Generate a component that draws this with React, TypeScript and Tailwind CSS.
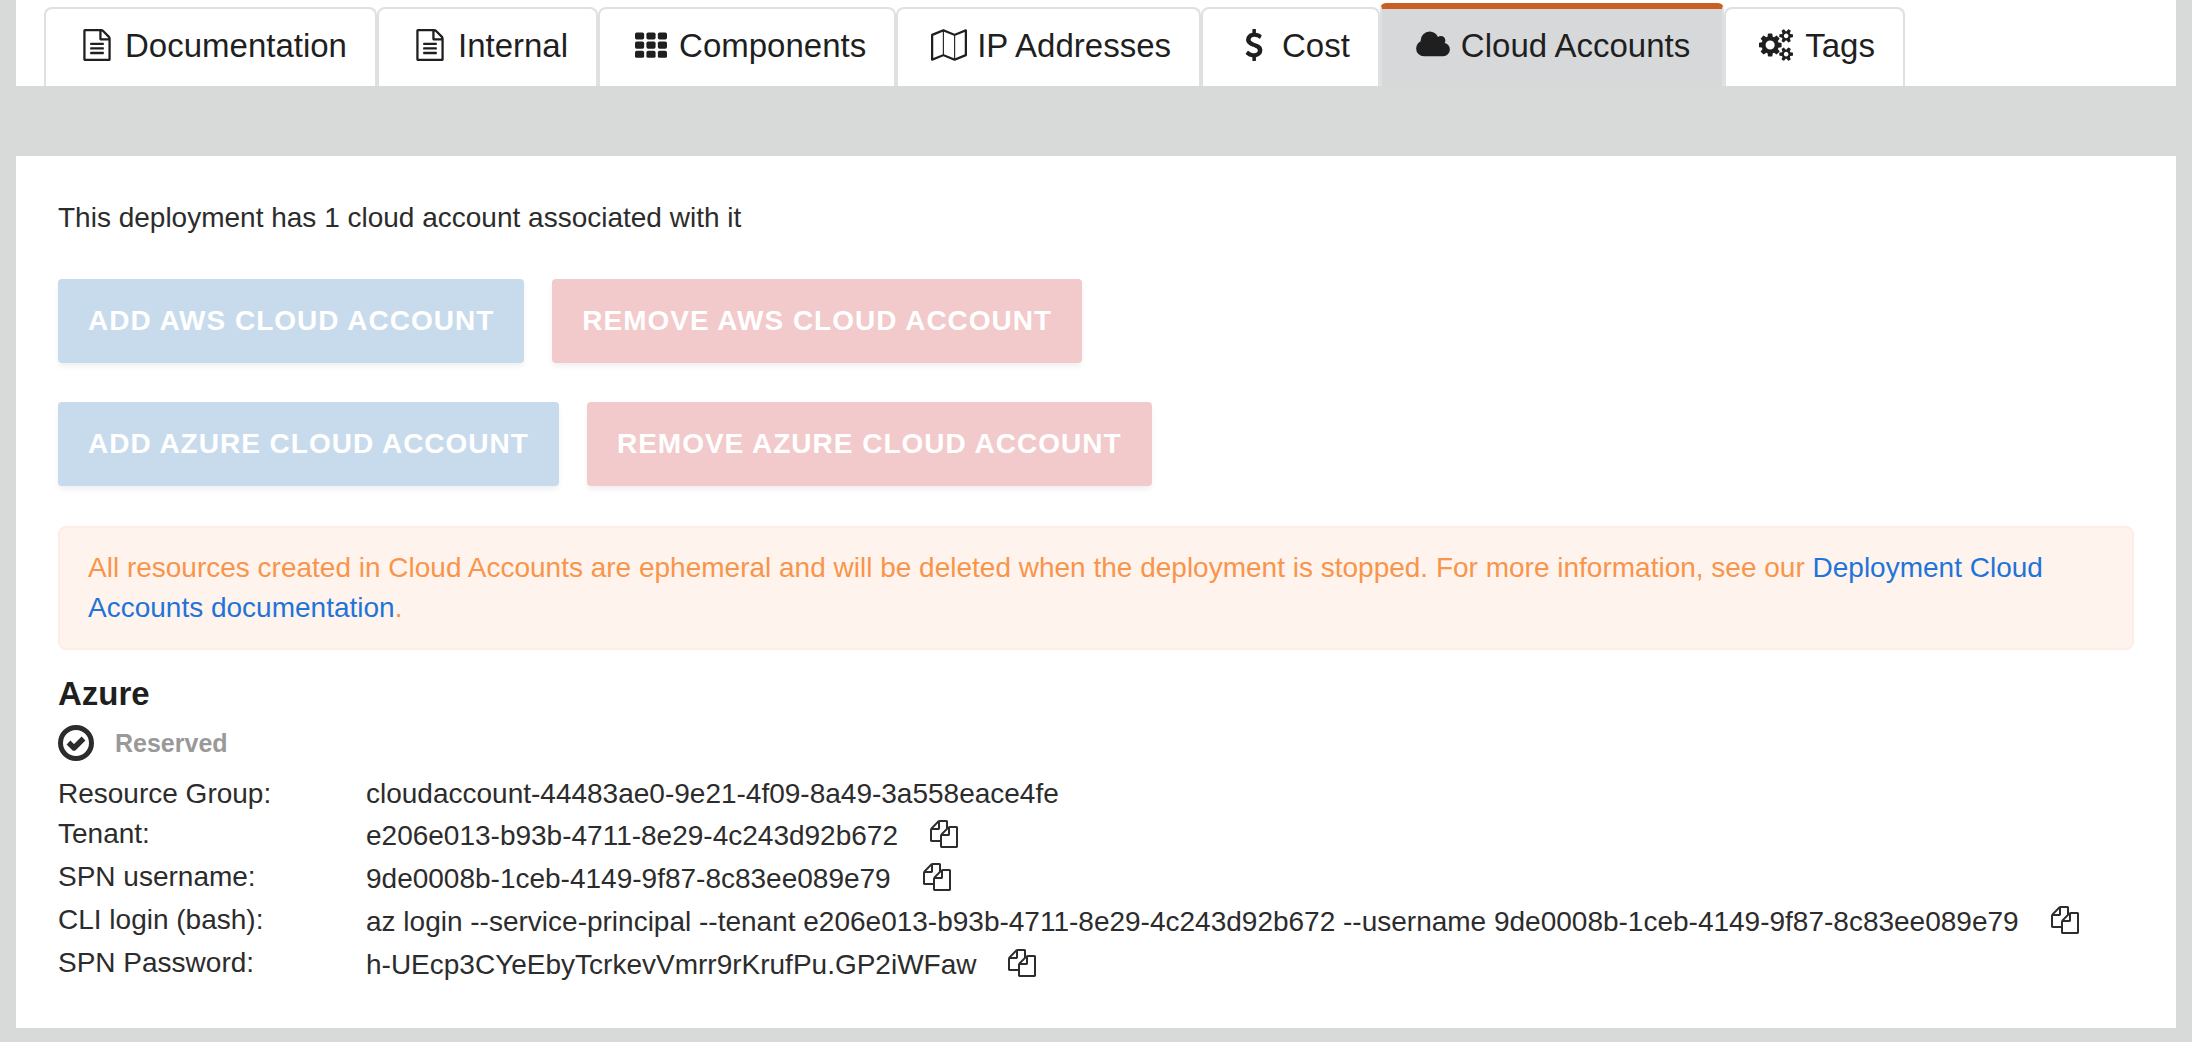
import React from "react";

function Icon({ box, className, children }: { box: string; className: string; children: React.ReactNode }) {
  return (
    <svg viewBox={box} className={className} fill="currentColor" aria-hidden="true">
      {children}
    </svg>
  );
}

const FileIcon = () => (
  <Icon box="0 0 1792 1792" className="size-8">
    <path d="M1596 380q28 28 48 76t20 88v1152q0 40-28 68t-68 28h-1344q-40 0-68-28t-28-68v-1600q0-40 28-68t68-28h896q40 0 88 20t76 48zm-444-244v376h376q-10-29-22-41l-313-313q-12-12-41-22zm384 1528v-1024h-416q-40 0-68-28t-28-68v-416h-768v1536h1280zm-1024-864q0-14 9-23t23-9h704q14 0 23 9t9 23v64q0 14-9 23t-23 9h-704q-14 0-23-9t-9-23v-64zm736 224q14 0 23 9t9 23v64q0 14-9 23t-23 9h-704q-14 0-23-9t-9-23v-64q0-14 9-23t23-9h704zm0 256q14 0 23 9t9 23v64q0 14-9 23t-23 9h-704q-14 0-23-9t-9-23v-64q0-14 9-23t23-9h704z" />
  </Icon>
);

const GridIcon = () => (
  <Icon box="0 0 1792 1792" className="size-8">
    {[192, 704, 1216].map((y) =>
      [0, 640, 1280].map((x) => <rect key={`${x}-${y}`} x={x} y={y} width="512" height="400" rx="96" />)
    )}
  </Icon>
);

const MapIcon = () => (
  <Icon box="0 0 2048 1792" className="h-8 w-9">
    <path
      fillRule="evenodd"
      d="M2020 11q28 20 28 53v1408q0 20-11 36t-29 23l-640 256q-24 11-48 0l-616-246-616 246q-10 5-24 5-19 0-36-11-28-20-28-53v-1408q0-20 11-36t29-23l640-256q24-11 48 0l616 246 616-246q32-13 60 6zM736 146v1270l576 230v-1270zM128 363v1270l544-217v-1270zM1920 1429v-1270l-544 217v1270z"
    />
  </Icon>
);

const DollarIcon = () => (
  <Icon box="0 0 1792 1792" className="size-8">
    <path d="M1362 1185q0 153-99.5 263.5t-258.5 136.5v175q0 14-9 23t-23 9h-135q-13 0-22.5-9.5t-9.5-22.5v-175q-66-9-127.5-31t-101.5-44.5-74-48-46.5-37.5-17.5-18q-17-21-2-41l103-135q7-10 23-12 15-2 24 9l2 2q113 99 243 125 37 8 74 8 81 0 142.5-43t61.5-122q0-28-15-53t-33.5-42-58.5-37.5-66-32-80-32.5q-39-16-61.5-25t-61.5-26.5-62.5-31-56.5-35.5-53.5-42.5-43.5-49-35.5-58-21-66.5-8.5-78q0-138 98-242t255-134v-180q0-13 9.5-22.5t22.5-9.5h135q14 0 23 9t9 23v176q57 6 110.5 23t87 33.5 63.5 37.5 39 29 15 14q17 18 5 38l-81 146q-8 15-23 16-14 3-27-7-3-3-14.5-12t-39-26.5-58.5-32-74.5-26-85.5-11.5q-95 0-155 43t-60 111q0 26 8.5 48t29.5 41.5 39.5 33 56 31 60.5 27 70 27.5q53 20 81 31.5t76 35 75.5 42.5 62 50 53 63.5 31.5 76.5 13 94z" />
  </Icon>
);

const CloudIcon = () => (
  <Icon box="0 0 2048 1792" className="h-8 w-9">
    <path d="M1984 1152q0 159-112.5 271.5t-271.5 112.5h-1088q-185 0-316.5-131.5t-131.5-316.5q0-132 71-241.5t187-163.5q-2-28-2-43 0-212 150-362t362-150q158 0 286.5 88t187.5 230q70-62 166-62 106 0 181 75t75 181q0 75-41 138 129 30 213 134.5t84 239.5z" />
  </Icon>
);

const CogsIcon = () => (
  <Icon box="0 0 1920 1792" className="h-8 w-9">
    <path d="M832 896q0-106-75-181t-181-75-181 75-75 181 75 181 181 75 181-75 75-181zm768 512q0-52-38-90t-90-38-90 38-38 90q0 53 37.5 90.5t90.5 37.5 90.5-37.5 37.5-90.5zm0-1024q0-52-38-90t-90-38-90 38-38 90q0 53 37.5 90.5t90.5 37.5 90.5-37.5 37.5-90.5zm-384 421v185q0 10-7 19.5t-16 10.5l-155 24q-11 35-32 76 34 48 90 115 7 11 7 20 0 12-7 19-23 30-82.5 89.5t-78.5 59.5q-11 0-21-7l-115-90q-37 19-77 31-11 108-23 155-7 24-30 24h-186q-11 0-20-7.5t-10-17.5l-23-153q-34-10-75-31l-118 89q-7 7-20 7-11 0-21-8-144-133-144-160 0-9 7-19 10-14 41-53t47-61q-23-44-35-82l-152-24q-10-1-17-9.5t-7-19.5v-185q0-10 7-19.5t16-10.5l155-24q11-35 32-76-34-48-90-115-7-11-7-20 0-12 7-20 22-30 82-89t79-59q11 0 21 7l115 90q34-18 77-32 11-108 23-154 7-24 30-24h186q11 0 20 7.5t10 17.5l23 153q34 10 75 31l118-89q8-7 20-7 11 0 21 8 144 133 144 160 0 8-7 19-12 16-42 54t-45 60q23 48 34 82l152 23q10 2 17 10.5t7 19.5zm640 533v140q0 16-149 31-12 27-30 52 51 113 51 138 0 4-4 7-122 71-124 71-8 0-46-47t-52-68q-20 2-30 2t-30-2q-14 21-52 68t-46 47q-2 0-124-71-4-3-4-7 0-25 51-138-18-25-30-52-149-15-149-31v-140q0-16 149-31 13-29 30-52-51-113-51-138 0-4 4-7 4-2 35-20t59-34 30-16q8 0 46 46.5t52 67.5q20-2 30-2t30 2q51-71 92-112l6-2q4 0 124 70 4 3 4 7 0 25-51 138 17 23 30 52 149 15 149 31zm0-1024v140q0 16-149 31-12 27-30 52 51 113 51 138 0 4-4 7-122 71-124 71-8 0-46-47t-52-68q-20 2-30 2t-30-2q-14 21-52 68t-46 47q-2 0-124-71-4-3-4-7 0-25 51-138-18-25-30-52-149-15-149-31v-140q0-16 149-31 13-29 30-52-51-113-51-138 0-4 4-7 4-2 35-20t59-34 30-16q8 0 46 46.5t52 67.5q20-2 30-2t30 2q51-71 92-112l6-2q4 0 124 70 4 3 4 7 0 25-51 138 17 23 30 52 149 15 149 31z" />
  </Icon>
);

const CopyIcon = () => (
  <Icon box="0 0 1792 1792" className="size-7">
    <path d="M1696 384q40 0 68 28t28 68v1216q0 40-28 68t-68 28h-960q-40 0-68-28t-28-68v-288h-544q-40 0-68-28t-28-68v-672q0-40 20-88t48-76l408-408q28-28 76-48t88-20h416q40 0 68 28t28 68v328q68-40 128-40h416zm-544 213l-299 299h299v-299zm-640-384l-299 299h299v-299zm196 647l316-316v-416h-384v416q0 40-28 68t-68 28h-416v640h512v-256q0-40 20-88t48-76zm956 804v-1152h-384v416q0 40-28 68t-68 28h-416v640h896z" />
  </Icon>
);

const tabs = [
  { label: "Documentation", icon: <FileIcon /> },
  { label: "Internal", icon: <FileIcon /> },
  { label: "Components", icon: <GridIcon /> },
  { label: "IP Addresses", icon: <MapIcon /> },
  { label: "Cost", icon: <DollarIcon /> },
  { label: "Cloud Accounts", icon: <CloudIcon />, active: true },
  { label: "Tags", icon: <CogsIcon /> },
];

const details = [
  { label: "Tenant:", value: "e206e013-b93b-4711-8e29-4c243d92b672" },
  { label: "SPN username:", value: "9de0008b-1ceb-4149-9f87-8c83ee089e79" },
  {
    label: "CLI login (bash):",
    value:
      "az login --service-principal --tenant e206e013-b93b-4711-8e29-4c243d92b672 --username 9de0008b-1ceb-4149-9f87-8c83ee089e79",
  },
  { label: "SPN Password:", value: "h-UEcp3CYeEbyTcrkevVmrr9rKrufPu.GP2iWFaw" },
];

function ActionButton({ tone, children }: { tone: "add" | "remove"; children: string }) {
  const color = tone === "add" ? "bg-[#c8dbec]" : "bg-[#f2cacb]";
  return (
    <button
      type="button"
      className={`${color} h-21 rounded px-[30px] text-[28px] font-bold tracking-[1px] text-white uppercase shadow-[0_4px_6px_-1px_rgba(0,0,0,0.07)]`}
    >
      {children}
    </button>
  );
}

export default function App() {
  return (
    <div className="min-h-screen bg-[#d8dad9] px-4 pb-3 font-['Liberation_Sans',Arial,sans-serif] text-[28px] leading-10 text-[#2c2c2c]">
      <nav className="flex items-end bg-white px-7 pt-[3px] text-[33px] text-[#1f1f1f]" role="tablist">
        {tabs.map((tab) => (
          <button
            key={tab.label}
            type="button"
            role="tab"
            aria-selected={!!tab.active}
            className={
              tab.active
                ? "flex h-[83px] items-center gap-[9px] rounded-t-md border-x-2 border-t-[6px] border-x-[#e0e0e0] border-t-[#c85f24] bg-[#d7d8da] px-8 pb-1 whitespace-nowrap"
                : "flex h-[79px] items-center gap-[9px] rounded-t-lg border-2 border-b-0 border-[#e0e0e0] pr-7 pb-1 pl-8 whitespace-nowrap"
            }
          >
            <span className="flex w-[38px] justify-center pb-[2px]">{tab.icon}</span>
            {tab.label}
          </button>
        ))}
      </nav>

      <main className="mt-[70px] bg-white px-[42px] py-[42px]">
        <p>This deployment has 1 cloud account associated with it</p>

        <div className="mt-[41px] mb-10 flex flex-col gap-[39px]">
          <div className="flex gap-7">
            <ActionButton tone="add">Add AWS Cloud Account</ActionButton>
            <ActionButton tone="remove">Remove AWS Cloud Account</ActionButton>
          </div>
          <div className="flex gap-7">
            <ActionButton tone="add">Add Azure Cloud Account</ActionButton>
            <ActionButton tone="remove">Remove Azure Cloud Account</ActionButton>
          </div>
        </div>

        <div role="note" className="rounded-lg border-2 border-[#feede2] bg-[#fff3ed] px-7 py-5 text-[#f9954b]">
          All resources created in Cloud Accounts are ephemeral and will be deleted when the deployment is stopped. For
          more information, see our{" "}
          <a href="#documentation" className="text-[#1f74d8]">
            Deployment Cloud Accounts documentation
          </a>
          .
        </div>

        <h2 className="mt-6 text-[33px] leading-10 font-bold text-[#1f1f1f]">Azure</h2>

        <div className="mt-[11px] mb-[13px] flex items-center gap-[21px]">
          <Icon box="0 0 36 36" className="size-9">
            <circle cx="18" cy="18" r="15.5" fill="none" stroke="currentColor" strokeWidth="5" />
            <path
              d="M10.500 17.500L16 23L25.500 13.500"
              fill="none"
              stroke="currentColor"
              strokeWidth="5.400"
              strokeLinejoin="round"
            />
          </Icon>
          <span className="text-[25px] leading-9 font-bold text-[#999999]">Reserved</span>
        </div>

        <table className="border-collapse text-left">
          <tbody>
            <tr>
              <th scope="row" className="w-[308px] p-0 align-top font-normal">
                Resource Group:
              </th>
              <td className="p-0">cloudaccount-44483ae0-9e21-4f09-8a49-3a558eace4fe</td>
            </tr>
            {details.map((row) => (
              <tr key={row.label} className="h-[43px]">
                <th scope="row" className="p-0 align-top font-normal">
                  {row.label}
                </th>
                <td className="p-0">
                  <div className="flex h-[43px] items-center gap-8">
                    {row.value}
                    <button type="button" aria-label={`Copy ${row.label}`} className="pb-1">
                      <CopyIcon />
                    </button>
                  </div>
                </td>
              </tr>
            ))}
          </tbody>
        </table>
      </main>
    </div>
  );
}
